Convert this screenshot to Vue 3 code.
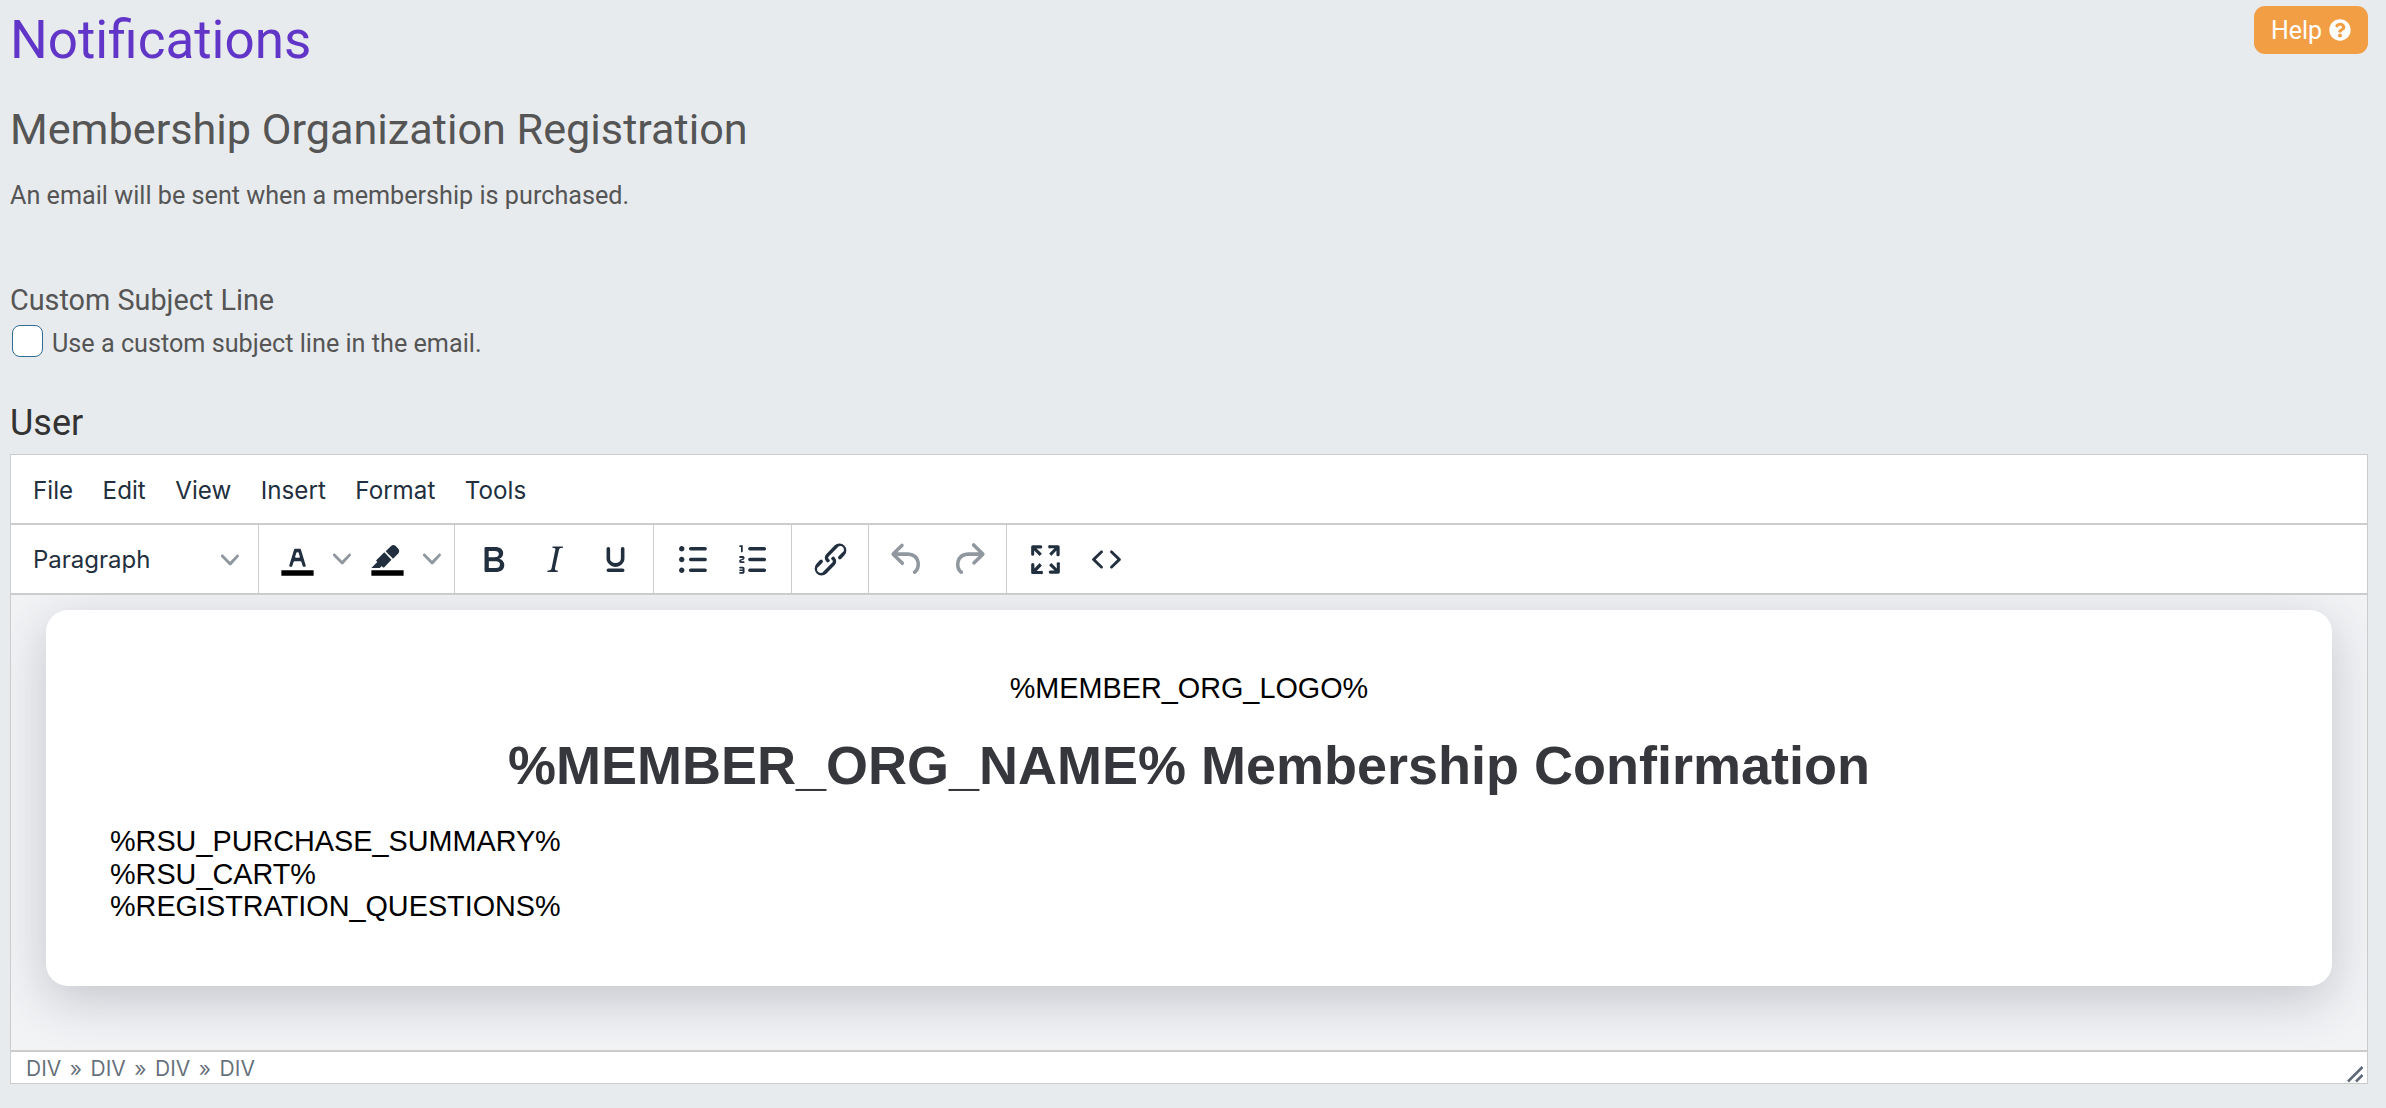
<template>
  <div class="page">
    <div class="title-row">
      <h1 class="title">Notifications</h1>
      <button class="help-btn">
        Help
        <svg class="help-icon" viewBox="0 0 512 512"><path fill="#fff" d="M504 256c0 136.997-111.043 248-248 248S8 392.997 8 256C8 119.083 119.043 8 256 8s248 111.083 248 248zM262.655 90c-54.497 0-89.255 22.957-116.549 63.758-3.536 5.286-2.353 12.415 2.715 16.258l34.699 26.31c5.205 3.947 12.621 3.008 16.665-2.122 17.864-22.658 30.113-35.797 57.303-35.797 20.429 0 45.698 13.148 45.698 32.958 0 14.976-12.363 22.667-32.534 33.976C247.128 238.528 216 254.941 216 296v4c0 6.627 5.373 12 12 12h56c6.627 0 12-5.373 12-12v-1.333c0-28.462 83.186-29.647 83.186-106.667 0-58.002-60.165-102-116.531-102zM256 338c-25.365 0-46 20.635-46 46 0 25.364 20.635 46 46 46s46-20.636 46-46c0-25.365-20.635-46-46-46z" /></svg>
      </button>
    </div>

    <h2 class="subtitle">Membership Organization Registration</h2>
    <p class="desc">An email will be sent when a membership is purchased.</p>

    <div class="field-label">Custom Subject Line</div>
    <label class="check-row">
      <span class="check"></span>
      <span class="check-text">Use a custom subject line in the email.</span>
    </label>

    <h3 class="section">User</h3>

    <div class="editor">
      <div class="menubar">
        <span v-for="m in menus" :key="m" class="menu-item">{{ m }}</span>
      </div>

      <div class="toolbar">
        <div class="group group-format">
          <span class="format-label">Paragraph</span>
          <svg class="chev" viewBox="0 0 10 10"><path :d="chevron" /></svg>
        </div>

        <div class="group">
          <div class="split">
            <svg class="icon" viewBox="0 0 24 24">
              <path fill="#000" d="M3 18h18v3H3z" />
              <path d="M8.7 16h-.8a.5.5 0 0 1-.5-.6l2.7-9c.1-.3.3-.4.5-.4h2.8c.2 0 .4.1.5.4l2.7 9a.5.5 0 0 1-.5.6h-.8a.5.5 0 0 1-.4-.4l-.7-2.2c0-.3-.3-.4-.5-.4h-3.4c-.2 0-.4.1-.5.4l-.7 2.2c0 .3-.2.4-.4.4zm2.6-7.6l-.6 2a.5.5 0 0 0 .5.6h1.6a.5.5 0 0 0 .5-.6l-.6-2c0-.3-.3-.4-.5-.4h-.4c-.2 0-.4.1-.5.4z" />
            </svg>
            <svg class="chev" viewBox="0 0 10 10"><path :d="chevron" /></svg>
          </div>
          <div class="split">
            <svg class="icon" viewBox="0 0 24 24">
              <path fill="#000" d="M3 18h18v3H3z" />
              <path d="M7.7 16.7H3l3.3-3.3-.7-.8L10.2 8l4 4.1-4 4.2c-.2.2-.6.2-.8 0l-.6-.7-1.1 1.1zm5-7.5L11 7.4l3-2.9a2 2 0 0 1 2.6 0L18 6c.7.7.7 2 0 2.7l-2.9 2.9-1.8-1.8-.5-.6z" />
            </svg>
            <svg class="chev" viewBox="0 0 10 10"><path :d="chevron" /></svg>
          </div>
        </div>

        <div v-for="(group, i) in groups" :key="i" class="group" :class="{ last: i === groups.length - 1 }">
          <div v-for="btn in group" :key="btn.name" class="btn" :class="{ disabled: btn.disabled }">
            <svg class="icon" viewBox="0 0 24 24"><path :d="btn.d" /></svg>
          </div>
        </div>
      </div>

      <div class="content">
        <div class="card">
          <div class="logo-line">%MEMBER_ORG_LOGO%</div>
          <div class="card-heading">%MEMBER_ORG_NAME% Membership Confirmation</div>
          <div class="card-body">
            <div>%RSU_PURCHASE_SUMMARY%</div>
            <div>%RSU_CART%</div>
            <div>%REGISTRATION_QUESTIONS%</div>
          </div>
        </div>
      </div>

      <div class="statusbar">
        <div class="path">
          <template v-for="(el, i) in crumbs" :key="i">
            <span v-if="i > 0" class="sep">»</span>
            <span>{{ el }}</span>
          </template>
        </div>
        <svg class="resize" viewBox="0 0 18 18">
          <path d="M1 16.5 15.5 2M9 16.5 15.5 10" />
        </svg>
      </div>
    </div>
  </div>
</template>

<script setup>
const menus = ['File', 'Edit', 'View', 'Insert', 'Format', 'Tools']
const crumbs = ['DIV', 'DIV', 'DIV', 'DIV']

const chevron = 'M8.7 2.2c.3-.3.8-.3 1 0 .4.4.4.9 0 1.2L5.7 7.8c-.3.3-.9.3-1.2 0L.2 3.4a.8.8 0 0 1 0-1.2c.3-.3.8-.3 1.1 0L5 6l3.7-3.8z'

const groups = [
  [
    { name: 'bold', d: 'M7.8 19c-.3 0-.5 0-.6-.2l-.2-.5V5.7c0-.2 0-.4.2-.5l.6-.2h5c1.5 0 2.7.3 3.5 1 .7.6 1.1 1.4 1.1 2.5a3 3 0 0 1-.6 1.9c-.4.6-1 1-1.6 1.2.4.1.9.3 1.3.6s.8.7 1 1.2c.4.4.5 1 .5 1.6 0 1.3-.4 2.3-1.3 3-.8.7-2.1 1-3.8 1H7.8zm5-8.3c.6 0 1.2-.1 1.6-.5.4-.3.6-.7.6-1.3 0-1.1-.8-1.7-2.3-1.7H9.3v3.5h3.4zm.5 6c.7 0 1.3-.1 1.7-.4.4-.4.6-.9.6-1.5s-.2-1-.7-1.4c-.4-.3-1-.4-2-.4H9.4v3.8h4z' },
    { name: 'italic', d: 'M16.7 4.7l-.1.9h-.3c-.6 0-1 0-1.4.3-.3.3-.4.6-.5 1.1l-2.1 9.8v.6c0 .5.4.8 1.4.8h.2l-.2.8H8l.2-.8h.2c1.1 0 1.8-.5 2-1.5l2-9.8.1-.5c0-.6-.4-.8-1.4-.8h-.3l.2-.9h5.8z' },
    { name: 'underline', d: 'M16 5c.6 0 1 .4 1 1v5.5a4 4 0 0 1-.4 1.8l-1 1.4a5.3 5.3 0 0 1-5.5 1 5 5 0 0 1-1.6-1c-.5-.4-.8-.9-1.1-1.4a4 4 0 0 1-.4-1.8V6c0-.6.4-1 1-1s1 .4 1 1v5.5c0 .3 0 .6.2 1l.6.7a3.3 3.3 0 0 0 2.2.8 3.4 3.4 0 0 0 2.2-.8c.3-.2.4-.5.6-.8l.2-.9V6c0-.6.4-1 1-1zM8 17h8c.6 0 1 .4 1 1s-.4 1-1 1H8a1 1 0 0 1 0-2z' },
  ],
  [
    { name: 'bullets', d: 'M11 5h8c.6 0 1 .4 1 1s-.4 1-1 1h-8a1 1 0 0 1 0-2zm0 6h8c.6 0 1 .4 1 1s-.4 1-1 1h-8a1 1 0 0 1 0-2zm0 6h8c.6 0 1 .4 1 1s-.4 1-1 1h-8a1 1 0 0 1 0-2zM4.5 6c0-.4.1-.8.4-1 .3-.4.7-.5 1.1-.5s.8.1 1 .4c.4.3.5.7.5 1.1s-.1.8-.4 1c-.3.4-.7.5-1.1.5s-.8-.1-1-.4c-.4-.3-.5-.7-.5-1.1zm0 6c0-.4.1-.8.4-1 .3-.4.7-.5 1.1-.5s.8.1 1 .4c.4.3.5.7.5 1.1s-.1.8-.4 1c-.3.4-.7.5-1.1.5s-.8-.1-1-.4c-.4-.3-.5-.7-.5-1.1zm0 6c0-.4.1-.8.4-1 .3-.4.7-.5 1.1-.5s.8.1 1 .4c.4.3.5.7.5 1.1s-.1.8-.4 1c-.3.4-.7.5-1.1.5s-.8-.1-1-.4c-.4-.3-.5-.7-.5-1.1z' },
    { name: 'numbers', d: 'M10 17h8c.6 0 1 .4 1 1s-.4 1-1 1h-8a1 1 0 0 1 0-2zm0-6h8c.6 0 1 .4 1 1s-.4 1-1 1h-8a1 1 0 0 1 0-2zm0-6h8c.6 0 1 .4 1 1s-.4 1-1 1h-8a1 1 0 1 1 0-2zM6 4v3.5c0 .3-.2.5-.5.5a.5.5 0 0 1-.5-.5V5h-.5a.5.5 0 0 1 0-1H6zm-1 8.8l.2.2h1.3c.3 0 .5.2.5.5s-.2.5-.5.5H4.9a1 1 0 0 1-.9-1V13c0-.4.3-.8.6-1l1.2-.4.2-.3a.2.2 0 0 0-.2-.2H4.5a.5.5 0 0 1-.5-.5c0-.3.2-.5.5-.5h1.6c.5 0 .9.4.9 1v.1c0 .4-.3.8-.6 1l-1.2.4-.2.3zM7 17v2c0 .6-.4 1-1 1H4.5a.5.5 0 0 1 0-1h1.2c.2 0 .3-.1.3-.3 0-.2-.1-.3-.3-.3H4.4a.4.4 0 1 1 0-.8h1.3c.2 0 .3-.1.3-.3 0-.2-.1-.3-.3-.3H4.5a.5.5 0 1 1 0-1H6c.6 0 1 .4 1 1z' },
  ],
  [
    { name: 'link', d: 'M6.2 12.3a1 1 0 0 1 1.4 1.4l-2 2a2 2 0 1 0 2.6 2.8l4.8-4.8a1 1 0 0 0 0-1.4 1 1 0 1 1 1.4-1.3 2.9 2.9 0 0 1 0 4L9.6 20a3.9 3.9 0 0 1-5.5-5.5l2-2.2zm11.6-.6a1 1 0 0 1-1.4-1.4l2-2a2 2 0 1 0-2.6-2.8L11 10.3a1 1 0 0 0 0 1.4A1 1 0 1 1 9.6 13a2.9 2.9 0 0 1 0-4L14.4 4a3.9 3.9 0 0 1 5.5 5.5l-2 2.2z' },
  ],
  [
    { name: 'undo', disabled: true, d: 'M6.4 8H12c3.7 0 6.2 2 6.8 5.1.6 2.7-.4 5.6-2.3 6.8a1 1 0 0 1-1-1.8c1.1-.6 1.8-2.7 1.4-4.6-.5-2.1-2.1-3.5-4.9-3.5H6.4l3.3 3.3a1 1 0 1 1-1.4 1.4l-5-5a1 1 0 0 1 0-1.4l5-5a1 1 0 0 1 1.4 1.4L6.4 8z' },
    { name: 'redo', disabled: true, d: 'M17.6 10H12c-2.8 0-4.4 1.4-4.9 3.5-.4 2 .3 4 1.4 4.6a1 1 0 1 1-1 1.8c-2-1.2-2.9-4.1-2.3-6.8.6-3 3-5.1 6.8-5.1h5.6l-3.3-3.3a1 1 0 1 1 1.4-1.4l5 5a1 1 0 0 1 0 1.4l-5 5a1 1 0 0 1-1.4-1.4l3.3-3.3z' },
  ],
  [
    { name: 'fullscreen', d: 'M15.3 10l-1.2-1.3 2.9-3h-2.3a.9.9 0 1 1 0-1.7H19c.5 0 .9.4.9.9v4.4a.9.9 0 1 1-1.8 0V7l-2.9 3zm0 4l3 3v-2.3a.9.9 0 1 1 1.7 0V19c0 .5-.4.9-.9.9h-4.4a.9.9 0 1 1 0-1.8H17l-3-2.9 1.3-1.2zM10 15.4l-2.9 3h2.3a.9.9 0 1 1 0 1.7H5a.9.9 0 0 1-1-.9v-4.4a.9.9 0 1 1 1.8 0V17l2.9-3 1.2 1.3zM8.7 10L5.7 7v2.3a.9.9 0 0 1-1.7 0V5c0-.5.4-.9.9-.9h4.4a.9.9 0 0 1 0 1.8H7l3 2.9-1.3 1.2z' },
    { name: 'code', d: 'M9.8 15.7c.3.3.3.8 0 1-.3.4-.9.4-1.2 0l-4.4-4.1a.8.8 0 0 1 0-1.2l4.4-4.2c.3-.3.9-.3 1.2 0 .3.3.3.8 0 1.1L6 12l3.8 3.7zm4.4 0c-.3.3-.3.8 0 1 .3.4.9.4 1.2 0l4.4-4.1c.3-.3.3-.9 0-1.2l-4.4-4.2a.8.8 0 0 0-1.2 0c-.3.3-.3.8 0 1.1L18 12l-3.8 3.7z' },
  ],
]
</script>

<style>
html, body {
  margin: 0;
  background: #e8ebee;
  overflow: hidden;
}
</style>

<style scoped>
.page {
  box-sizing: border-box;
  height: 1108px;
  padding: 6px 18px 0 10px;
  font-family: Roboto, sans-serif;
  color: #555;
}

.title-row {
  display: flex;
  justify-content: space-between;
  align-items: flex-start;
  height: 76px;
}

.title {
  margin: 0;
  font-size: 53px;
  line-height: 68px;
  font-weight: 400;
  color: #6135c7;
}

.help-btn {
  display: flex;
  align-items: center;
  justify-content: center;
  gap: 7px;
  width: 114px;
  height: 48px;
  padding: 0;
  border: none;
  border-radius: 11px;
  background: #f19e45;
  color: #fff;
  font-family: Roboto, sans-serif;
  font-size: 25px;
}

.help-icon {
  width: 22px;
  height: 22px;
}

.subtitle {
  margin: 20px 0 0;
  font-size: 43.2px;
  line-height: 56px;
  font-weight: 400;
  color: #555;
}

.desc {
  margin: 22px 0 0;
  font-size: 25.2px;
  line-height: 32px;
  color: #555;
}

.field-label {
  margin-top: 70px;
  font-size: 28.8px;
  line-height: 36px;
}

.check-row {
  display: flex;
  align-items: flex-start;
  gap: 9px;
  margin-top: 7px;
  font-size: 25.2px;
  line-height: 32px;
}

.check-text {
  padding-top: 3px;
}

.check {
  box-sizing: border-box;
  width: 31px;
  height: 32px;
  margin-left: 2px;
  background: #fff;
  border: 1px solid #2f6e92;
  border-radius: 8px;
}

.section {
  margin: 39px 0 0;
  font-size: 36px;
  line-height: 48px;
  font-weight: 400;
  color: #333;
}

.editor {
  box-sizing: border-box;
  display: flex;
  flex-direction: column;
  height: 630px;
  margin-top: 7px;
  background: #fff;
  border: 1px solid #ccc;
  font-family: Inter, sans-serif;
  color: #222f3e;
}

.menubar {
  box-sizing: border-box;
  display: flex;
  align-items: center;
  gap: 29.5px;
  height: 70px;
  padding: 2px 22px 0;
  border-bottom: 2px solid #ccc;
  font-size: 24.2px;
}

.toolbar {
  box-sizing: border-box;
  display: flex;
  flex-shrink: 0;
  height: 70px;
  border-bottom: 2px solid #ccc;
}

.group {
  box-sizing: border-box;
  display: flex;
  align-items: center;
  height: 71px;
  padding: 0 7px 3px 8px;
  border-right: 1px solid #ccc;
}

.group.last {
  border-right: none;
}

.group-format {
  justify-content: space-between;
  width: 248px;
  padding: 0 19px 2px 22px;
  font-size: 24px;
}

.split {
  box-sizing: border-box;
  display: flex;
  align-items: center;
  gap: 14px;
  width: 90px;
  padding-left: 9px;
}

.btn {
  display: flex;
  align-items: center;
  justify-content: center;
  width: 61px;
}

.btn.disabled .icon {
  fill: rgba(34, 47, 62, 0.5);
}

.icon {
  flex-shrink: 0;
  width: 43px;
  height: 43px;
  fill: #222f3e;
}

.chev {
  width: 18px;
  height: 18px;
  fill: rgba(34, 47, 62, 0.5);
}

.content {
  flex: 1;
  min-height: 0;
  padding: 15px 35px 0;
  background: #f2f3f5;
  overflow: hidden;
}

.card {
  box-sizing: border-box;
  height: 376px;
  padding: 58px 64px 0;
  background: #fff;
  border-radius: 22px;
  box-shadow: 0 14px 50px rgba(50, 55, 75, 0.24);
  font-family: "Liberation Sans", Arial, sans-serif;
  color: #000;
}

.logo-line {
  font-size: 28.8px;
  line-height: 40px;
  text-align: center;
}

.card-heading {
  margin-top: 25px;
  font-size: 54px;
  line-height: 64px;
  font-weight: 700;
  text-align: center;
  color: #36373c;
}

.card-body {
  margin-top: 28px;
  font-size: 28.8px;
  line-height: 32.5px;
}

.statusbar {
  box-sizing: border-box;
  display: flex;
  flex-shrink: 0;
  align-items: center;
  justify-content: space-between;
  height: 33px;
  padding: 1px 2px 0 15px;
  background: #fff;
  border-top: 2px solid #ccc;
  font-size: 21px;
  color: rgba(34, 47, 62, 0.7);
}

.sep {
  margin: 0 8.5px;
}

.resize {
  align-self: flex-end;
  flex-shrink: 0;
  width: 18px;
  height: 18px;
  fill: none;
  stroke: #5e6876;
  stroke-width: 2.5;
}
</style>
